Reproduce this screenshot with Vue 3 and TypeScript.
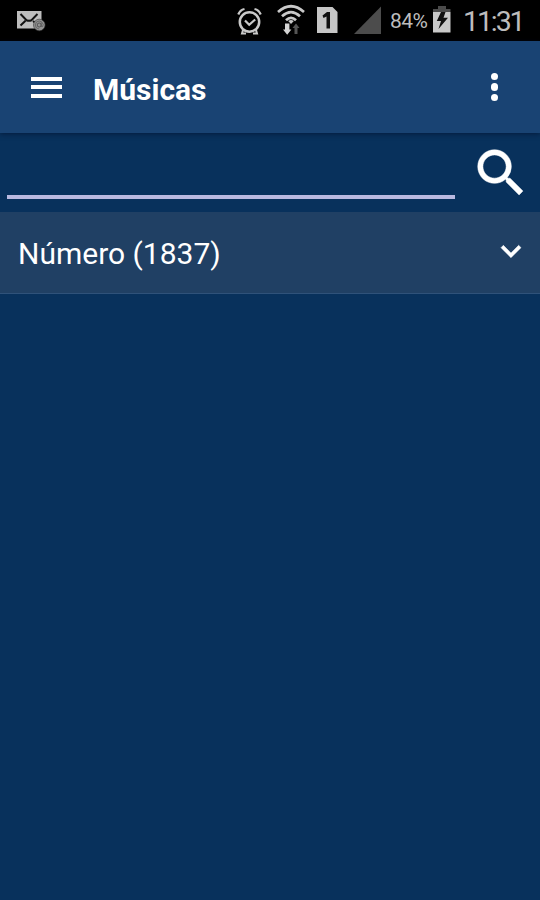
<script setup lang="ts">
import { ref } from 'vue'

const query = ref('')
const groups = [{ label: 'Número', count: 1837 }]
</script>

<template>
  <div class="screen">
    <header class="status">
      <svg class="mail" width="30" height="24" viewBox="0 0 30 24">
        <path d="M1 2h24.500v17.500H1z" fill="#bdbdbd" />
        <path d="M4.500 5l6 6.200q2.500 1 5 0l6-6.200M4.500 16.500l5-4.700M17 12l3 2.500" fill="none" stroke="#111" stroke-width="2" />
        <circle cx="23.300" cy="16" r="5.800" fill="#929292" stroke="#333" stroke-width=".6" />
        <circle cx="23.200" cy="16" r="2" fill="none" stroke="#444" stroke-width=".8" />
        <path d="M25.200 13.500v4q2 1 2-2q-1-3.500-4-3.500q-3.500 0-4 4q.5 4 4 4" fill="none" stroke="#555" stroke-width=".7" />
      </svg>
      <span class="spacer"></span>
      <svg class="alarm" width="26" height="30" viewBox="0 0 26 30">
        <circle cx="12.500" cy="16" r="9.700" fill="none" stroke="#c9c9c9" stroke-width="2.500" />
        <path d="M8 14.500l4.200 4.300 6-5.300" fill="none" stroke="#c9c9c9" stroke-width="2.200" />
        <path d="M1.300 8.500Q3 4 7.500 3M17.500 3Q22 4 23.700 8.500" fill="none" stroke="#c9c9c9" stroke-width="2.300" />
        <path d="M6 24l-1 3.500h4M19 24l1 3.500h-4" fill="none" stroke="#c9c9c9" stroke-width="2" />
      </svg>
      <svg class="wifi" width="28" height="32" viewBox="0 0 28 32">
        <g fill="none" stroke="#c9c9c9" stroke-width="2.700">
          <path d="M1 9Q14-2.500 27 9" />
          <path d="M5 13.200Q14 5 23 13.200" />
          <path d="M9 17.200Q14 12.500 19 17.200" />
        </g>
        <path d="M11.200 18Q14 15.800 16.800 18L14 21z" fill="#c9c9c9" />
        <path d="M8 20.500h4.400v6h2l-4.200 5.300L6 26.500h2z" fill="#d4d4d4" />
        <path d="M17.500 31v-6h-2l3.500-4.500 3.500 4.500h-2v6z" fill="#555" />
      </svg>
      <svg class="sim" width="23" height="28" viewBox="0 0 23 28">
        <path d="M1 1h15.500l5 5v21H1z" fill="#c6c6c6" />
        <path d="M6.500 9.500l4.500-3.500h3v16.500h-3.500V10.500l-3 1.500z" fill="#111" />
      </svg>
      <svg class="signal" width="28" height="28" viewBox="0 0 28 28">
        <path d="M0 28L27 .5V28z" fill="#4c4c4c" />
      </svg>
      <span class="percent">84%</span>
      <svg class="battery" width="18" height="27" viewBox="0 0 18 27">
        <path d="M0 6V3h5V0h8v3h4.500v3z" fill="#4b4b4b" />
        <path d="M0 6h17.500v20.500H0z" fill="#c9c9c9" />
        <path d="M8 6h4.500l-2 5.800h4.500L5.500 23l2.500-8H3.800z" fill="#111" />
      </svg>
      <span class="clock">11:31</span>
    </header>

    <nav class="toolbar">
      <button class="menu" aria-label="Menu"><i></i><i></i><i></i></button>
      <h1>Músicas</h1>
      <button class="more" aria-label="Mais"><i></i><i></i><i></i></button>
    </nav>

    <form class="search" @submit.prevent>
      <input v-model="query" type="text" />
      <button aria-label="Buscar">
        <svg width="62" height="62" viewBox="0 0 24 24" fill="#fff" stroke="#fff" stroke-width=".2">
          <path d="M15.500 14h-.79l-.28-.27A6.471 6.471 0 0 0 16 9.500 6.500 6.500 0 1 0 9.500 16c1.610 0 3.090-.59 4.230-1.570l.27.28v.79l5 4.990L20.490 19l-4.990-5zm-6 0C7.010 14 5 11.990 5 9.500S7.010 5 9.500 5 14 7.010 14 9.500 11.990 14 9.500 14z" />
        </svg>
      </button>
    </form>

    <section v-for="group in groups" :key="group.label" class="group">
      <span class="label">{{ group.label }} ({{ group.count }})</span>
      <svg class="chevron" width="40" height="40" viewBox="0 0 24 24" fill="#fff" stroke="#fff" stroke-width=".3">
        <path d="M16.590 8.590L12 13.170 7.410 8.590 6 10l6 6 6-6z" />
      </svg>
    </section>
  </div>
</template>

<style>
body {
  margin: 0;
  background: #08315c;
}
</style>

<style scoped>
.screen {
  width: 540px;
  height: 900px;
  overflow: hidden;
  background: #08315c;
  color: #fff;
  font-family: Roboto, "Liberation Sans", sans-serif;
}
button {
  border: 0;
  padding: 0;
  background: none;
}
svg {
  display: block;
  flex: none;
}
.status {
  box-sizing: border-box;
  height: 41px;
  display: flex;
  align-items: flex-start;
  background: #000;
  color: #bdbdbd;
}
.mail { margin: 9px 0 0 16px; }
.spacer { flex: 1; }
.alarm { margin: 6px 14px 0 0; }
.wifi { margin: 3px 11px 0 0; }
.sim { margin: 6px 15px 0 0; }
.signal { margin: 6px 8px 0 0; }
.percent {
  width: 43px;
  margin-top: 9px;
  font-size: 21px;
  line-height: 25px;
  letter-spacing: -0.5px;
  white-space: nowrap;
}
.battery { margin-top: 6px; }
.clock {
  width: 77px;
  margin: 5px 0 0 12px;
  font-size: 28.500px;
  line-height: 34px;
  letter-spacing: -2.100px;
  white-space: nowrap;
}
.toolbar {
  position: relative;
  box-sizing: border-box;
  height: 92px;
  padding: 0 42px 0 31px;
  display: flex;
  align-items: center;
  background: #194373;
  box-shadow: 0 1px 5px rgba(0, 10, 35, 0.55);
}
.menu {
  width: 31px;
  display: flex;
  flex-direction: column;
  gap: 4.500px;
}
.menu i {
  height: 4px;
  background: #fff;
}
.toolbar h1 {
  flex: 1;
  margin: 5px 0 0 31px;
  font-size: 30px;
  line-height: 36px;
  font-weight: 700;
}
.more {
  display: flex;
  flex-direction: column;
  gap: 3px;
}
.more i {
  width: 7.400px;
  height: 7.400px;
  border-radius: 50%;
  background: #fff;
}
.search {
  height: 79px;
  display: flex;
  align-items: flex-start;
  padding: 0 8px 0 7px;
}
.search input {
  box-sizing: border-box;
  width: 448px;
  height: 66px;
  padding: 20px 4px 4px;
  border: 0;
  border-bottom: 4px solid #b9b9e0;
  border-radius: 0;
  outline: none;
  background: transparent;
  color: #fff;
  font: 30px Roboto, sans-serif;
}
.search button {
  margin: 9px 0 0 15px;
}
.group {
  box-sizing: border-box;
  height: 82px;
  display: flex;
  align-items: center;
  justify-content: space-between;
  padding: 0 9px 0 18px;
  background: #204064;
  border-bottom: 1px solid #2f527a;
}
.chevron {
  margin-bottom: 3px;
}
.label {
  font-size: 30px;
  line-height: 36px;
  margin-top: 2px;
}
</style>
